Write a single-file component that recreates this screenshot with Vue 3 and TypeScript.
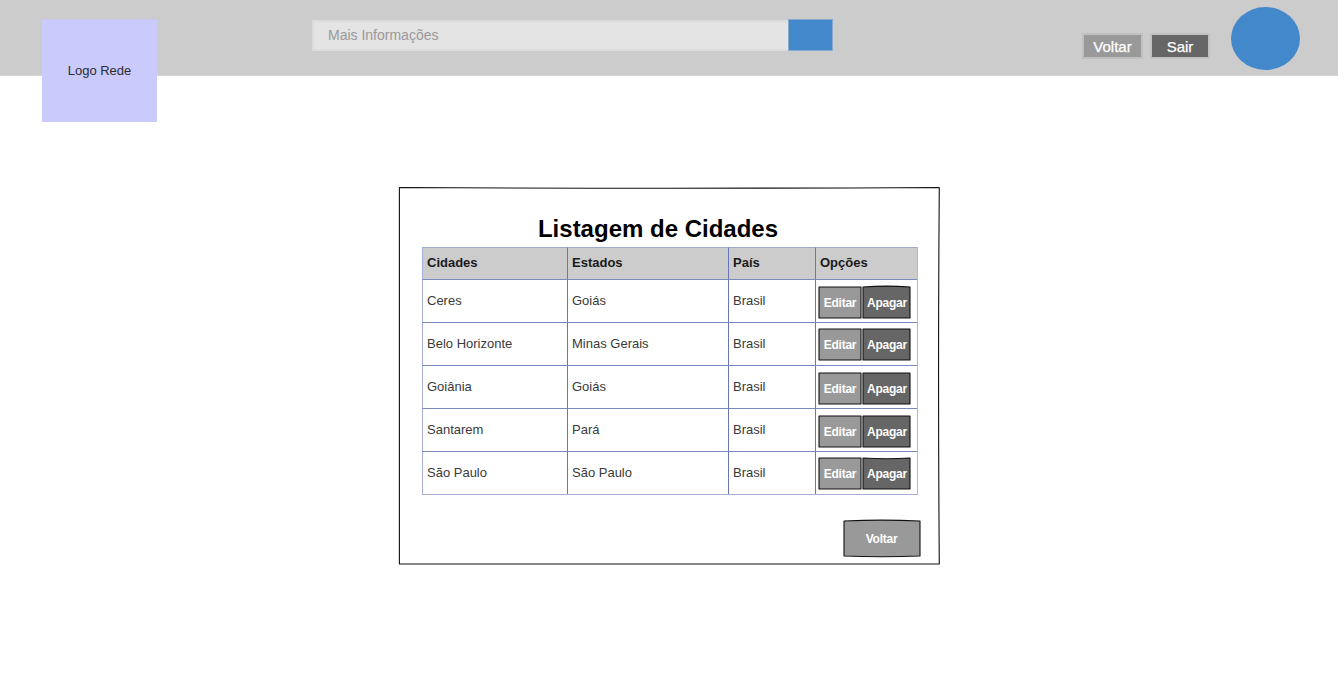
<script setup lang="ts">
interface City {
  name: string
  state: string
  country: string
  offset: number
  topCurve: number
}

const headings: string[] = ['Cidades', 'Estados', 'País', 'Opções']

// offset: distance of the buttons from the row line; topCurve: bow of the upper stroke of "Apagar"
const cities: City[] = [
  { name: 'Ceres', state: 'Goiás', country: 'Brasil', offset: 6, topCurve: -0.8 },
  { name: 'Belo Horizonte', state: 'Minas Gerais', country: 'Brasil', offset: 5, topCurve: 1 },
  { name: 'Goiânia', state: 'Goiás', country: 'Brasil', offset: 6, topCurve: 1 },
  { name: 'Santarem', state: 'Pará', country: 'Brasil', offset: 6, topCurve: 1 },
  { name: 'São Paulo', state: 'São Paulo', country: 'Brasil', offset: 5, topCurve: 2.6 },
]
</script>

<template>
  <div class="page">
    <header class="bar">
      <div class="logo">Logo Rede</div>
      <div class="search">
        <div class="field">Mais Informações</div>
        <div class="go"></div>
      </div>
      <nav class="actions">
        <button class="nav-btn" type="button">Voltar</button>
        <button class="nav-btn dark" type="button">Sair</button>
      </nav>
      <div class="avatar"></div>
    </header>

    <main class="panel">
      <svg class="sketch" width="542" height="379" viewBox="0 0 542 379">
        <path d="M1.4 1.5 Q271 2.9 541.3 1.5 Q539.8 190 541.3 378 Q271 376.8 1.4 378 Z" />
      </svg>
      <h1>Listagem de Cidades</h1>
      <div class="table">
        <div class="row head">
          <div v-for="h in headings" :key="h" class="cell">{{ h }}</div>
        </div>
        <div v-for="c in cities" :key="c.name" class="row">
          <div class="cell">{{ c.name }}</div>
          <div class="cell">{{ c.state }}</div>
          <div class="cell">{{ c.country }}</div>
          <div class="cell options" :style="{ paddingTop: c.offset + 'px' }">
            <button class="mini edit" type="button">
              <svg class="sketch" width="44" height="33" viewBox="0 0 44 33">
                <path d="M1 1 H43 V32 H1 Z" fill="#999" />
              </svg>
              <span>Editar</span>
            </button>
            <button class="mini remove" type="button">
              <svg class="sketch" width="49" height="33" viewBox="0 0 49 33">
                <path :d="`M1 1 Q24.5 ${c.topCurve} 48 1 V32 H1 Z`" fill="#666" />
              </svg>
              <span>Apagar</span>
            </button>
          </div>
        </div>
      </div>
      <button class="mini back" type="button">
        <svg class="sketch" width="79" height="39" viewBox="0 0 79 39">
          <path d="M1 2 Q39 0.3 77 2 V37 Q39 38.4 1 37 Z" fill="#999" />
        </svg>
        <span>Voltar</span>
      </button>
    </main>
  </div>
</template>

<style>
body {
  margin: 0;
  background: #fff;
}
</style>

<style scoped>
.page {
  height: 690px;
  overflow: hidden;
  font-family: "Liberation Sans", Arial, sans-serif;
  font-size: 13px;
  color: #3a3a3a;
}
.page * {
  box-sizing: border-box;
}
button {
  margin: 0;
  padding: 0;
  font-family: inherit;
}
.bar {
  display: flex;
  align-items: flex-start;
  height: 76px;
  background: #ccc;
  border-bottom: 1px solid #d6d6d6;
}
.logo {
  width: 115px;
  height: 103px;
  margin: 19px 0 0 42px;
  background: #cacafc;
  border-top: 1px solid #c8c8ee;
  line-height: 102px;
  text-align: center;
  color: #2a2a33;
  flex: none;
}
.search {
  display: flex;
  margin: 19px 0 0 155px;
}
.field {
  width: 476px;
  height: 31px;
  margin-top: 1px;
  padding-left: 14px;
  background: #e4e4e4;
  border: 2px solid #dcdcdc;
  border-right: 0;
  font-size: 14px;
  line-height: 27px;
  color: #999;
}
.go {
  width: 45px;
  height: 32px;
  background: #4488cc;
  border: 1px solid #88aacc;
}
.actions {
  display: flex;
  gap: 7px;
  margin: 33px 0 0 249px;
}
.nav-btn {
  width: 61px;
  height: 26px;
  padding-top: 1px;
  background: #999;
  border: 2px solid #c0c0c0;
  font-size: 15px;
  line-height: 22px;
  color: #fff;
  -webkit-text-stroke: 0.25px #fff;
}
.nav-btn.dark {
  width: 60px;
  background: #666;
}
.avatar {
  width: 69px;
  height: 63px;
  margin: 7px 0 0 21px;
  border-radius: 50%;
  background: #4488cc;
}
.panel {
  position: relative;
  width: 542px;
  height: 379px;
  margin: 110px 0 0 398px;
  padding: 27px 20px 0 24px;
}
.sketch {
  position: absolute;
  left: 0;
  top: 0;
  overflow: visible;
  fill: none;
  stroke: #111;
  stroke-width: 1.1;
  stroke-linejoin: round;
}
h1 {
  margin: 0 0 3px;
  padding-right: 26px;
  height: 31px;
  line-height: 31px;
  font-size: 24px;
  text-align: center;
  color: #000;
}
.table {
  width: 496px;
  border-right: 1px solid #b0b9dc;
  border-bottom: 1px solid #a5afd7;
}
.row {
  display: grid;
  grid-template-columns: 145px 161px 87px 102px;
  height: 43px;
}
.head {
  height: 32px;
  background: #ccc;
  font-weight: bold;
  color: #1a1a1a;
}
.cell {
  padding-left: 4px;
  border-top: 1px solid #7b89bd;
  border-left: 1px solid #6878b5;
  line-height: 42px;
}
.cell:first-child {
  border-left-color: #a5afd7;
}
.head .cell {
  border-top-color: #a2aaca;
  line-height: 30px;
}
.options {
  display: flex;
  align-items: flex-start;
  padding-left: 2px;
}
.mini {
  position: relative;
  background: none;
  border: 0;
  height: 33px;
  padding-top: 1px;
  font-size: 12px;
  font-weight: bold;
  letter-spacing: -0.25px;
  line-height: 32px;
  color: #fff;
}
.mini span {
  position: relative;
}
.edit {
  width: 44px;
}
.remove {
  width: 49px;
  padding-left: 1px;
}
.back {
  display: block;
  width: 77px;
  height: 39px;
  margin: 24px 0 0 421px;
  padding-top: 1px;
  line-height: 39px;
}
</style>
